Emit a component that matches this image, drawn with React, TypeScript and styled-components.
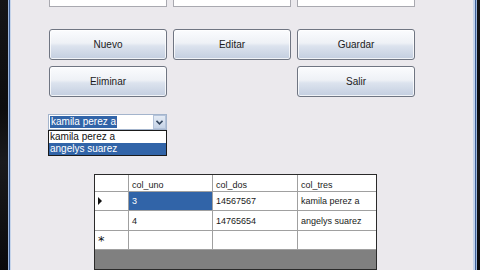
import React from "react";
import styled, { createGlobalStyle } from "styled-components";

const Global = createGlobalStyle`
  html, body { margin: 0; padding: 0; background: #0b0b10; }
  body { width: 480px; height: 270px; overflow: hidden; font-family: "Liberation Sans", Tahoma, Arial, sans-serif; }
`;

const Screen = styled.div`
  width: 480px;
  height: 270px;
  display: flex;
  background: linear-gradient(180deg, #151517 0%, #0c0c0e 40%, #1a1a1c 60%, #09090b 100%);
  overflow: hidden;
`;

const LeftDark = styled.div`
  width: 8px;
  flex: none;
`;

const RightDark = styled.div`
  width: 3px;
  flex: none;
`;

const Window = styled.div`
  flex: 1;
  display: flex;
  border-left: 1px solid #9db6dc;
  border-right: 1px solid #9db6dc;
  box-shadow: inset 1px 0 0 #3d5f97, inset -1px 0 0 #3d5f97;
  padding: 0 3px 0 2px;
  background: #c4d3ea;
`;

const Form = styled.div`
  flex: 1;
  background: #ebe9ed;
  padding-left: 38px;
  display: flex;
  flex-direction: column;
  overflow: hidden;
`;

const TextRow = styled.div`
  display: grid;
  grid-template-columns: repeat(3, 118px);
  column-gap: 6px;
  margin-top: -14px;
`;

const TextBox = styled.div`
  height: 21px;
  background: #ffffff;
  border: 1px solid #a9a9b0;
  box-sizing: border-box;
`;

const ButtonGrid = styled.div`
  display: grid;
  grid-template-columns: repeat(3, 118px);
  grid-auto-rows: 31px;
  column-gap: 6px;
  row-gap: 6px;
  margin-top: 22px;
`;

const Button = styled.button<{ $col?: number }>`
  grid-column: ${(p) => p.$col ?? "auto"};
  margin: 0;
  padding: 0;
  border: 1px solid #6f7582;
  border-radius: 3px;
  background: linear-gradient(180deg, #fbfcfe 0%, #eef1f6 45%, #dce3ee 55%, #c3cee0 100%);
  box-shadow: inset 0 0 0 1px rgba(255, 255, 255, 0.75);
  font-family: "Liberation Sans", Tahoma, Arial, sans-serif;
  font-size: 10px;
  color: #1b1b1b;
  text-align: center;
`;

const ComboWrap = styled.div`
  margin-top: 17px;
  margin-left: -1px;
  width: 119px;
  display: flex;
  flex-direction: column;
`;

const ComboField = styled.div`
  height: 16px;
  box-sizing: border-box;
  display: flex;
  background: #ffffff;
  border: 1px solid #a3b4cc;
  padding: 1px;
`;

const ComboText = styled.span`
  flex: 1;
  display: flex;
  align-items: center;
`;

const Selected = styled.span`
  background: #3164a8;
  color: #ffffff;
  font-size: 10px;
  line-height: 12px;
  padding: 0 1px;
`;

const ArrowBtn = styled.div`
  width: 13px;
  display: flex;
  align-items: center;
  justify-content: center;
  background: linear-gradient(180deg, #e4ebf5 0%, #c6d3e6 100%);
  border: 1px solid #b4c3da;
  box-sizing: border-box;
  margin: -1px -1px -1px 0;
`;

const List = styled.div`
  border: 1px solid #1a1a1a;
  background: #ffffff;
  display: flex;
  flex-direction: column;
`;

const ListItem = styled.div<{ $sel?: boolean }>`
  height: 12px;
  line-height: 12px;
  font-size: 10px;
  padding-left: 1px;
  color: ${(p) => (p.$sel ? "#ffffff" : "#111111")};
  background: ${(p) => (p.$sel ? "#3164a8" : "#ffffff")};
`;

const Grid = styled.div`
  margin-top: 18px;
  margin-left: 45px;
  width: 283px;
  flex: 1;
  box-sizing: border-box;
  border: 1px solid #2a2a2a;
  background: #808080;
  display: flex;
  flex-direction: column;
`;

const GridRow = styled.div<{ $h: number }>`
  display: grid;
  grid-template-columns: 34px 84px 85px 1fr;
  height: ${(p) => p.$h}px;
  background: #ffffff;
  border-bottom: 1px solid #a0a0a0;
`;

const Cell = styled.div<{ $sel?: boolean; $head?: boolean }>`
  font-size: 9px;
  padding-left: 3px;
  display: flex;
  align-items: ${(p) => (p.$head ? "flex-end" : "center")};
  padding-bottom: ${(p) => (p.$head ? "1px" : "0")};
  border-right: 1px solid #a0a0a0;
  color: ${(p) => (p.$sel ? "#ffffff" : "#1a1a1a")};
  background: ${(p) => (p.$sel ? "#3164a8" : "#ffffff")};
  white-space: nowrap;
  overflow: hidden;
  &:last-child { border-right: none; }
`;

const RowHead = styled(Cell)`
  padding-left: 3px;
  font-size: 13px;
`;

const Star = styled.span`
  font-family: "DejaVu Sans", sans-serif;
  font-size: 13px;
  line-height: 13px;
  padding-top: 1px;
  color: #111;
`;

const Tri = styled.span`
  width: 0;
  height: 0;
  border-top: 4px solid transparent;
  border-bottom: 4px solid transparent;
  border-left: 4px solid #111;
`;

export default function App() {
  return (
    <>
      <Global />
      <Screen>
        <LeftDark />
        <Window>
          <Form>
            <TextRow>
              <TextBox />
              <TextBox />
              <TextBox />
            </TextRow>
            <ButtonGrid>
              <Button>Nuevo</Button>
              <Button>Editar</Button>
              <Button>Guardar</Button>
              <Button>Eliminar</Button>
              <Button $col={3}>Salir</Button>
            </ButtonGrid>
            <ComboWrap>
              <ComboField>
                <ComboText>
                  <Selected>kamila perez a</Selected>
                </ComboText>
                <ArrowBtn>
                  <svg width="7" height="5" viewBox="0 0 7 5">
                    <path d="M0.5 0.8 L3.5 3.8 L6.5 0.8" fill="none" stroke="#34475f" strokeWidth="1.6" />
                  </svg>
                </ArrowBtn>
              </ComboField>
              <List>
                <ListItem>kamila perez a</ListItem>
                <ListItem $sel>angelys suarez</ListItem>
              </List>
            </ComboWrap>
            <Grid>
              <GridRow $h={16}>
                <RowHead $head />
                <Cell $head>col_uno</Cell>
                <Cell $head>col_dos</Cell>
                <Cell $head>col_tres</Cell>
              </GridRow>
              <GridRow $h={18}>
                <RowHead><Tri /></RowHead>
                <Cell $sel>3</Cell>
                <Cell>14567567</Cell>
                <Cell>kamila perez a</Cell>
              </GridRow>
              <GridRow $h={19}>
                <RowHead />
                <Cell>4</Cell>
                <Cell>14765654</Cell>
                <Cell>angelys suarez</Cell>
              </GridRow>
              <GridRow $h={18}>
                <RowHead><Star>*</Star></RowHead>
                <Cell />
                <Cell />
                <Cell />
              </GridRow>
            </Grid>
          </Form>
        </Window>
        <RightDark />
      </Screen>
    </>
  );
}
